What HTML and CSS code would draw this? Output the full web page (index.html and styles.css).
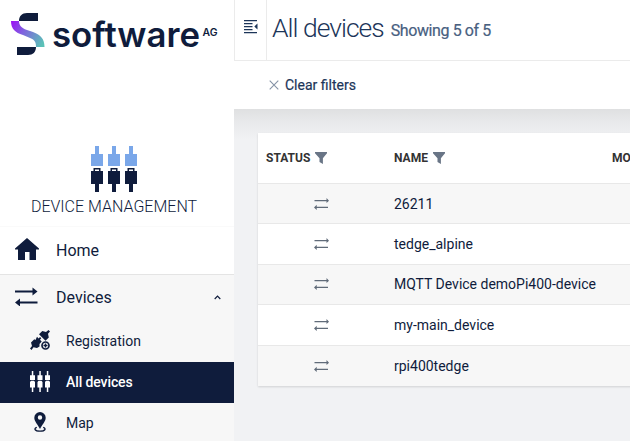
FILE: index.html
```
<!DOCTYPE html>
<html lang="en">
<head>
<meta charset="utf-8">
<title>Device Management</title>
<link rel="stylesheet" href="styles.css">
</head>
<body>
<svg width="0" height="0" class="defs">
  <symbol id="swap" viewBox="0 0 23 19"><path d="M0 3.500h17.500V.5L22.500 4.500l-5 4V5.500H0zM22.500 14.500H5v-3L0 15.500l5 4v-3h17.500z"/></symbol>
  <symbol id="swap-thin" viewBox="0 0 15 12"><path d="M.5 2.100h12V0L15 2.700l-2.500 2.200V3.300H.5zM14 8.800H2.700v-2L0 9.400 2.700 12v-2H14z"/></symbol>
  <symbol id="funnel" viewBox="0 0 12 12"><path d="M0 0h12v1.300L7.900 6.300V12L4.500 10V6.300L0 1.300z"/></symbol>
</svg>
<div class="app">
  <aside class="sidebar">
    <div class="brand">
      <svg width="234" height="62" viewBox="0 0 234 62">
        <defs><linearGradient id="g" x1="11" y1="24" x2="45" y2="44" gradientUnits="userSpaceOnUse"><stop offset="0" stop-color="#9a16f4"/><stop offset=".35" stop-color="#8060df"/><stop offset=".95" stop-color="#5bc2b7"/></linearGradient></defs>
        <path fill="#0f1c3c" d="M19 21c0-5 3-8 8-8h11v8zM17 47h19c0 5-3 8-8 8H17z"/>
        <path fill="url(#g)" d="M11 21h8c0 4 2 7 8 9l6 2c8 3 11.500 7 11.500 15H36c0-5-1-7-6-9l-7-3c-8-2.500-12-6-12-14z"/>
        <text class="logo-text" x="52" y="47" textLength="148" lengthAdjust="spacingAndGlyphs">software</text>
        <text class="logo-sup" x="202.500" y="35.500" textLength="15" lengthAdjust="spacingAndGlyphs">AG</text>
      </svg>
    </div>
    <div class="product">
      <svg width="48" height="48" viewBox="0 0 48 48">
        <path fill="#7aa7e9" d="M0 9h4V1h4v8h4v12H0zM17 9h4V1h4v8h4v12H17zM34 9h4V1h4v8h4v12H34z"/>
        <path fill="#0f1c3c" fill-rule="evenodd" d="M0 26h2.500v-3h7v3H12v13H8v8H4v-8H0zM4 24.500V26h4v-1.500zM17 26h2.500v-3h7v3H29v13h-4v8h-4v-8h-4zM21 24.500V26h4v-1.500zM34 26h2.500v-3h7v3H46v13h-4v8h-4v-8h-4zM38 24.500V26h4v-1.500z"/>
      </svg>
      <div class="product-name">DEVICE MANAGEMENT</div>
    </div>
    <nav>
      <a class="item home"><svg width="24" height="22" viewBox="0 0 24 22"><path d="M12 0l12 10.500V11.500h-3V22h-6.500v-8h-4.500v8H3V11.500H0v-1z"/></svg><span>Home</span></a>
      <a class="item devices"><svg width="23" height="20"><use href="#swap" width="23" height="19"/></svg><span>Devices</span><svg class="caret" width="7" height="5" viewBox="0 0 7 5"><path d="M.7 4L3.500 1.200 6.300 4" fill="none" stroke="#0f1c3c" stroke-width="1.200"/></svg></a>
      <a class="sub"><svg width="20" height="20" viewBox="0 0 20 20"><path d="M18.500 0L20 1.500l-2 2.300.8 3.700-3.300 3.300-6.500-6.500L12.300 1l3.700 1zM7 6.800l1.600 1.600L10 7l1.300 1.300L10 9.800l1.700 1.700L9.500 14v2.500L7 18l-3.500-.8L1.500 20 0 18.500l2-2.500-1-3.500 3.300-3.300L5.500 10z"/><circle cx="15.500" cy="15.500" r="3.500" fill="none" stroke="#0f1c3c" stroke-width="1.700"/><path d="M14.800 13.500h1.400v1.300h1.300v1.400h-1.300v1.300h-1.400v-1.300h-1.300v-1.400h1.300z"/></svg><span>Registration</span></a>
      <a class="sub active"><svg width="20" height="21" viewBox="0 0 20 21"><path d="M0 4.200h1.800V0h1.500v4.200H5V9H0zM7.500 4.200h1.800V0h1.500v4.200h1.700V9h-5zM15 4.200h1.800V0h1.500v4.200H20V9h-5zM0 11l1-1.200h3L5 11v5.500H3.300V21H1.800v-4.500H0zM7.500 11l1-1.200h3l1 1.200v5.500h-1.700V21H9.300v-4.500H7.500zM15 11l1-1.200h3l1 1.200v5.500h-1.700V21h-1.500v-4.500H15z"/></svg><span>All devices</span></a>
      <a class="sub"><svg width="20" height="20" viewBox="0 0 20 20"><path fill-rule="evenodd" d="M10 0a5.700 5.700 0 0 1 5.700 5.700C15.700 9.500 12 12.500 10 17 8 12.500 4.300 9.500 4.300 5.700A5.700 5.700 0 0 1 10 0zm0 3.300a2.200 2.200 0 1 0 0 4.400 2.200 2.200 0 0 0 0-4.400z"/><path d="M6.800 15.300c-3 1-2.500 3.800 3.200 3.800s6.200-2.800 3.200-3.800" fill="none" stroke="#0f1c3c" stroke-width="1.400"/></svg><span>Map</span></a>
    </nav>
  </aside>
  <main>
    <header>
      <div class="toggle"><svg width="14" height="14" viewBox="0 0 14 14"><path d="M0 0h13v1.300H0zM0 3h8.500v1.300H0zM0 6h8.500v1.300H0zM0 9h8.500v1.300H0zM0 12h13v1.300H0zM13.500 3.500v6L10.300 6.500z"/></svg></div>
      <h1>All devices</h1><span class="count">Showing 5 of 5</span>
    </header>
    <div class="actions"><svg width="10" height="10" viewBox="0 0 10 10"><path d="M.7.700l8.600 8.600M9.300.700L.7 9.300" stroke="#8592a6" stroke-width="1.100"/></svg><span>Clear filters</span></div>
    <section class="content">
      <div class="table">
        <div class="row head"><div class="c1"><span class="th-status">STATUS</span><svg width="12" height="12"><use href="#funnel"/></svg></div><div class="c2"><span class="th-name">NAME</span><svg width="12" height="12"><use href="#funnel"/></svg></div><div class="c3">MODEL</div></div>
        <div class="row"><div class="status"><svg width="15" height="12"><use href="#swap-thin"/></svg></div><div class="c2">26211</div></div>
        <div class="row"><div class="status"><svg width="15" height="12"><use href="#swap-thin"/></svg></div><div class="c2">tedge_alpine</div></div>
        <div class="row"><div class="status"><svg width="15" height="12"><use href="#swap-thin"/></svg></div><div class="c2">MQTT Device demoPi400-device</div></div>
        <div class="row"><div class="status"><svg width="15" height="12"><use href="#swap-thin"/></svg></div><div class="c2">my-main_device</div></div>
        <div class="row"><div class="status"><svg width="15" height="12"><use href="#swap-thin"/></svg></div><div class="c2">rpi400tedge</div></div>
      </div>
    </section>
  </main>
</div>
</body>
</html>
```
FILE: styles.css
```
* { box-sizing: border-box; }
body { margin: 0; font-family: Roboto, "Liberation Sans", sans-serif; color: #0f1c3c; overflow: hidden; }
svg { display: block; flex: none; fill: #0f1c3c; }
.defs { display: none; }
.app { display: flex; width: 630px; height: 441px; overflow: hidden; }
.sidebar { width: 234px; flex: none; background: #fff; }
.brand { height: 145px; }
.logo-text { font: 600 34px Inter, sans-serif; }
.logo-sup { font: 600 10px Inter, sans-serif; }
.product { height: 82px; display: flex; flex-direction: column; align-items: center; border-bottom: 1px solid #fafafa; }
.product svg { margin-left: -4px; }
.product-name { font-size: 16px; font-weight: 300; line-height: 20px; margin: 4px 6px 0 0; white-space: nowrap; }
.item { display: flex; align-items: center; padding-left: 15px; font-size: 16px; }
.item svg { width: 24px; }
.item span { margin-left: 17px; }
.home { border-bottom: 1px solid #e4e4e4; height: 48px; padding-bottom: 1px; }
.home svg { margin-bottom: 2px; }
.devices { height: 46px; padding-bottom: 2px; background: #f7f7f7; }
.devices svg { margin-top: -1px; }
.item .caret { width: 7px; margin: 1px 13px 0 auto; }
.sub { display: flex; align-items: center; height: 41px; padding: 0 0 1px 30px; background: #f7f7f7; font-size: 14px; }
.sub svg { margin-top: -2px; }
.sub span { margin-left: 16px; }
.active { background: #0f1c3c; color: #fff; font-weight: 500; letter-spacing: -.1px; }
.active svg { fill: #fff; }
main { width: 396px; flex: none; overflow: hidden; background: #f1f2f4; }
header { display: flex; height: 61px; background: #fff; border-bottom: 1px solid #ebebeb; color: #1c3559; }
.toggle { width: 33px; border: solid #ebebeb; border-width: 0 1px; padding: 20px 0 0 9px; }
.toggle svg { fill: #1c3559; }
h1 { margin: 11px 0 0 5px; font-size: 26.500px; font-weight: 300; line-height: 34px; letter-spacing: -1px; white-space: nowrap; }
.count { margin: 20px 0 0 7px; font-size: 16px; line-height: 22px; letter-spacing: -.4px; color: #48607f; -webkit-text-stroke: .2px #48607f; }
.actions { display: flex; height: 48px; align-items: center; padding-left: 35px; background: #fff; font-size: 14px; color: #1c3559; }
.actions span { margin-left: 6px; -webkit-text-stroke: .2px #1c3559; }
.content { height: 332px; padding: 24px 0 0 24px; background: linear-gradient(#dfe0e1 0, #e9eaec 14px, #f1f2f4 30px); }
.table { width: 400px; height: 253px; background: #fff; box-shadow: 0 1px 2px #0002; }
.row { display: flex; align-items: center; height: 40.400px; border-bottom: 1px solid #e8e8e8; font-size: 14px; }
.row:nth-child(even) { background: #f7f7f7; }
.row:last-child { border: 0; }
.head { height: 51px; font-size: 12px; font-weight: 700; color: #333; }
.head svg { fill: #697586; }
.c1, .c2 { display: flex; align-items: center; gap: 5px; }
.c1 { width: 136px; padding-left: 8px; }
.c2 { width: 218px; white-space: nowrap; }
.status { width: 136px; padding-left: 56px; }
.status svg { fill: #606b79; }
```
